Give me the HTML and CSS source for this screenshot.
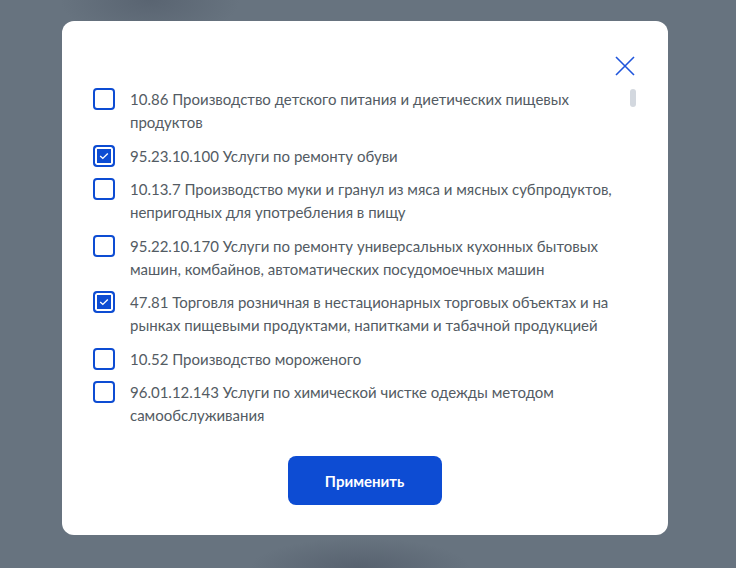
FILE: index.html
```
<!DOCTYPE html>
<html lang="ru">
<head>
<meta charset="utf-8">
<link rel="stylesheet" href="styles.css">
</head>
<body>
<div class="modal">
  <div class="modal-head">
    <button class="close" aria-label="Закрыть">
      <svg width="20" height="20" viewBox="0 0 20 20"><path d="M1 1 L19 19 M19 1 L1 19" stroke="#1f55dc" stroke-width="1.6" fill="none"/></svg>
    </button>
  </div>
  <div class="scroll">
    <ul class="list">
      <li class="item"><span class="box"></span><span class="label">10.86 Производство детского питания и диетических пищевых продуктов</span></li>
      <li class="item"><span class="box checked"><svg width="10" height="8" viewBox="0 0 10 8"><path d="M1.2 4 L3.8 6.4 L8.8 1.4" stroke="#fff" stroke-width="1.4" fill="none"/></svg></span><span class="label">95.23.10.100 Услуги по ремонту обуви</span></li>
      <li class="item"><span class="box"></span><span class="label">10.13.7 Производство муки и гранул из мяса и мясных субпродуктов, непригодных для употребления в пищу</span></li>
      <li class="item"><span class="box"></span><span class="label">95.22.10.170 Услуги по ремонту универсальных кухонных бытовых машин, комбайнов, автоматических посудомоечных машин</span></li>
      <li class="item"><span class="box checked"><svg width="10" height="8" viewBox="0 0 10 8"><path d="M1.2 4 L3.8 6.4 L8.8 1.4" stroke="#fff" stroke-width="1.4" fill="none"/></svg></span><span class="label">47.81 Торговля розничная в нестационарных торговых объектах и на рынках пищевыми продуктами, напитками и табачной продукцией</span></li>
      <li class="item"><span class="box"></span><span class="label">10.52 Производство мороженого</span></li>
      <li class="item"><span class="box"></span><span class="label">96.01.12.143 Услуги по химической чистке одежды методом самообслуживания</span></li>
      <li class="item"><span class="box"></span><span class="label">96.01.12.144 Услуги по стирке белья методом самообслуживания</span></li>
    </ul>
    <span class="thumb"></span>
  </div>
  <div class="actions">
    <button class="apply">Применить</button>
  </div>
</div>
</body>
</html>
```
FILE: styles.css
```
* { box-sizing: border-box; }
html, body { margin: 0; height: 100%; }
body {
  background:
    radial-gradient(ellipse 90px 40px at 150px 0px, rgba(80,90,104,0.6), rgba(80,90,104,0)),
    radial-gradient(ellipse 110px 30px at 360px 568px, rgba(80,90,104,0.7), rgba(80,90,104,0)),
    #67737f;
  font-family: Lato, "Noto Sans", sans-serif;
  padding: 21px 0 0 62px;
  overflow: hidden;
}
.modal {
  width: 606px;
  height: 514px;
  background: #fff;
  border-radius: 12px;
  display: flex;
  flex-direction: column;
  padding: 35px 32px 30px 31px;
}
.modal-head {
  display: flex;
  justify-content: flex-end;
  height: 22px;
}
.close {
  border: 0;
  background: none;
  padding: 0;
  width: 20px;
  height: 20px;
  cursor: pointer;
  margin-right: 1px;
}
.scroll {
  position: relative;
  margin-top: 8px;
  height: 350px;
  overflow: hidden;
}
.list {
  list-style: none;
  margin: 0;
  padding: 2px 0 0 0;
  display: flex;
  flex-direction: column;
  gap: 10.5px;
  width: 525px;
}
.item {
  display: flex;
  align-items: flex-start;
  gap: 15px;
}
.box {
  flex: none;
  width: 22px;
  height: 22px;
  border: 2px solid #0d4cd3;
  border-radius: 4px;
  display: flex;
  align-items: center;
  justify-content: center;
}
.box.checked {
  background: #0d4cd3;
  box-shadow: inset 0 0 0 2px #fff;
}
.label {
  font-size: 15px;
  line-height: 23px;
  color: #535b63;
}
.thumb {
  position: absolute;
  right: 0;
  top: 3px;
  width: 6px;
  height: 18px;
  border-radius: 3px;
  background: #d3d8df;
}
.actions {
  margin-top: auto;
  display: flex;
  justify-content: center;
}
.apply {
  width: 154px;
  height: 49px;
  border: 0;
  border-radius: 8px;
  background: #0d4cd3;
  color: #fff;
  font-family: Lato, "Noto Sans", sans-serif;
  font-weight: 700;
  font-size: 15px;
  cursor: pointer;
}
```
